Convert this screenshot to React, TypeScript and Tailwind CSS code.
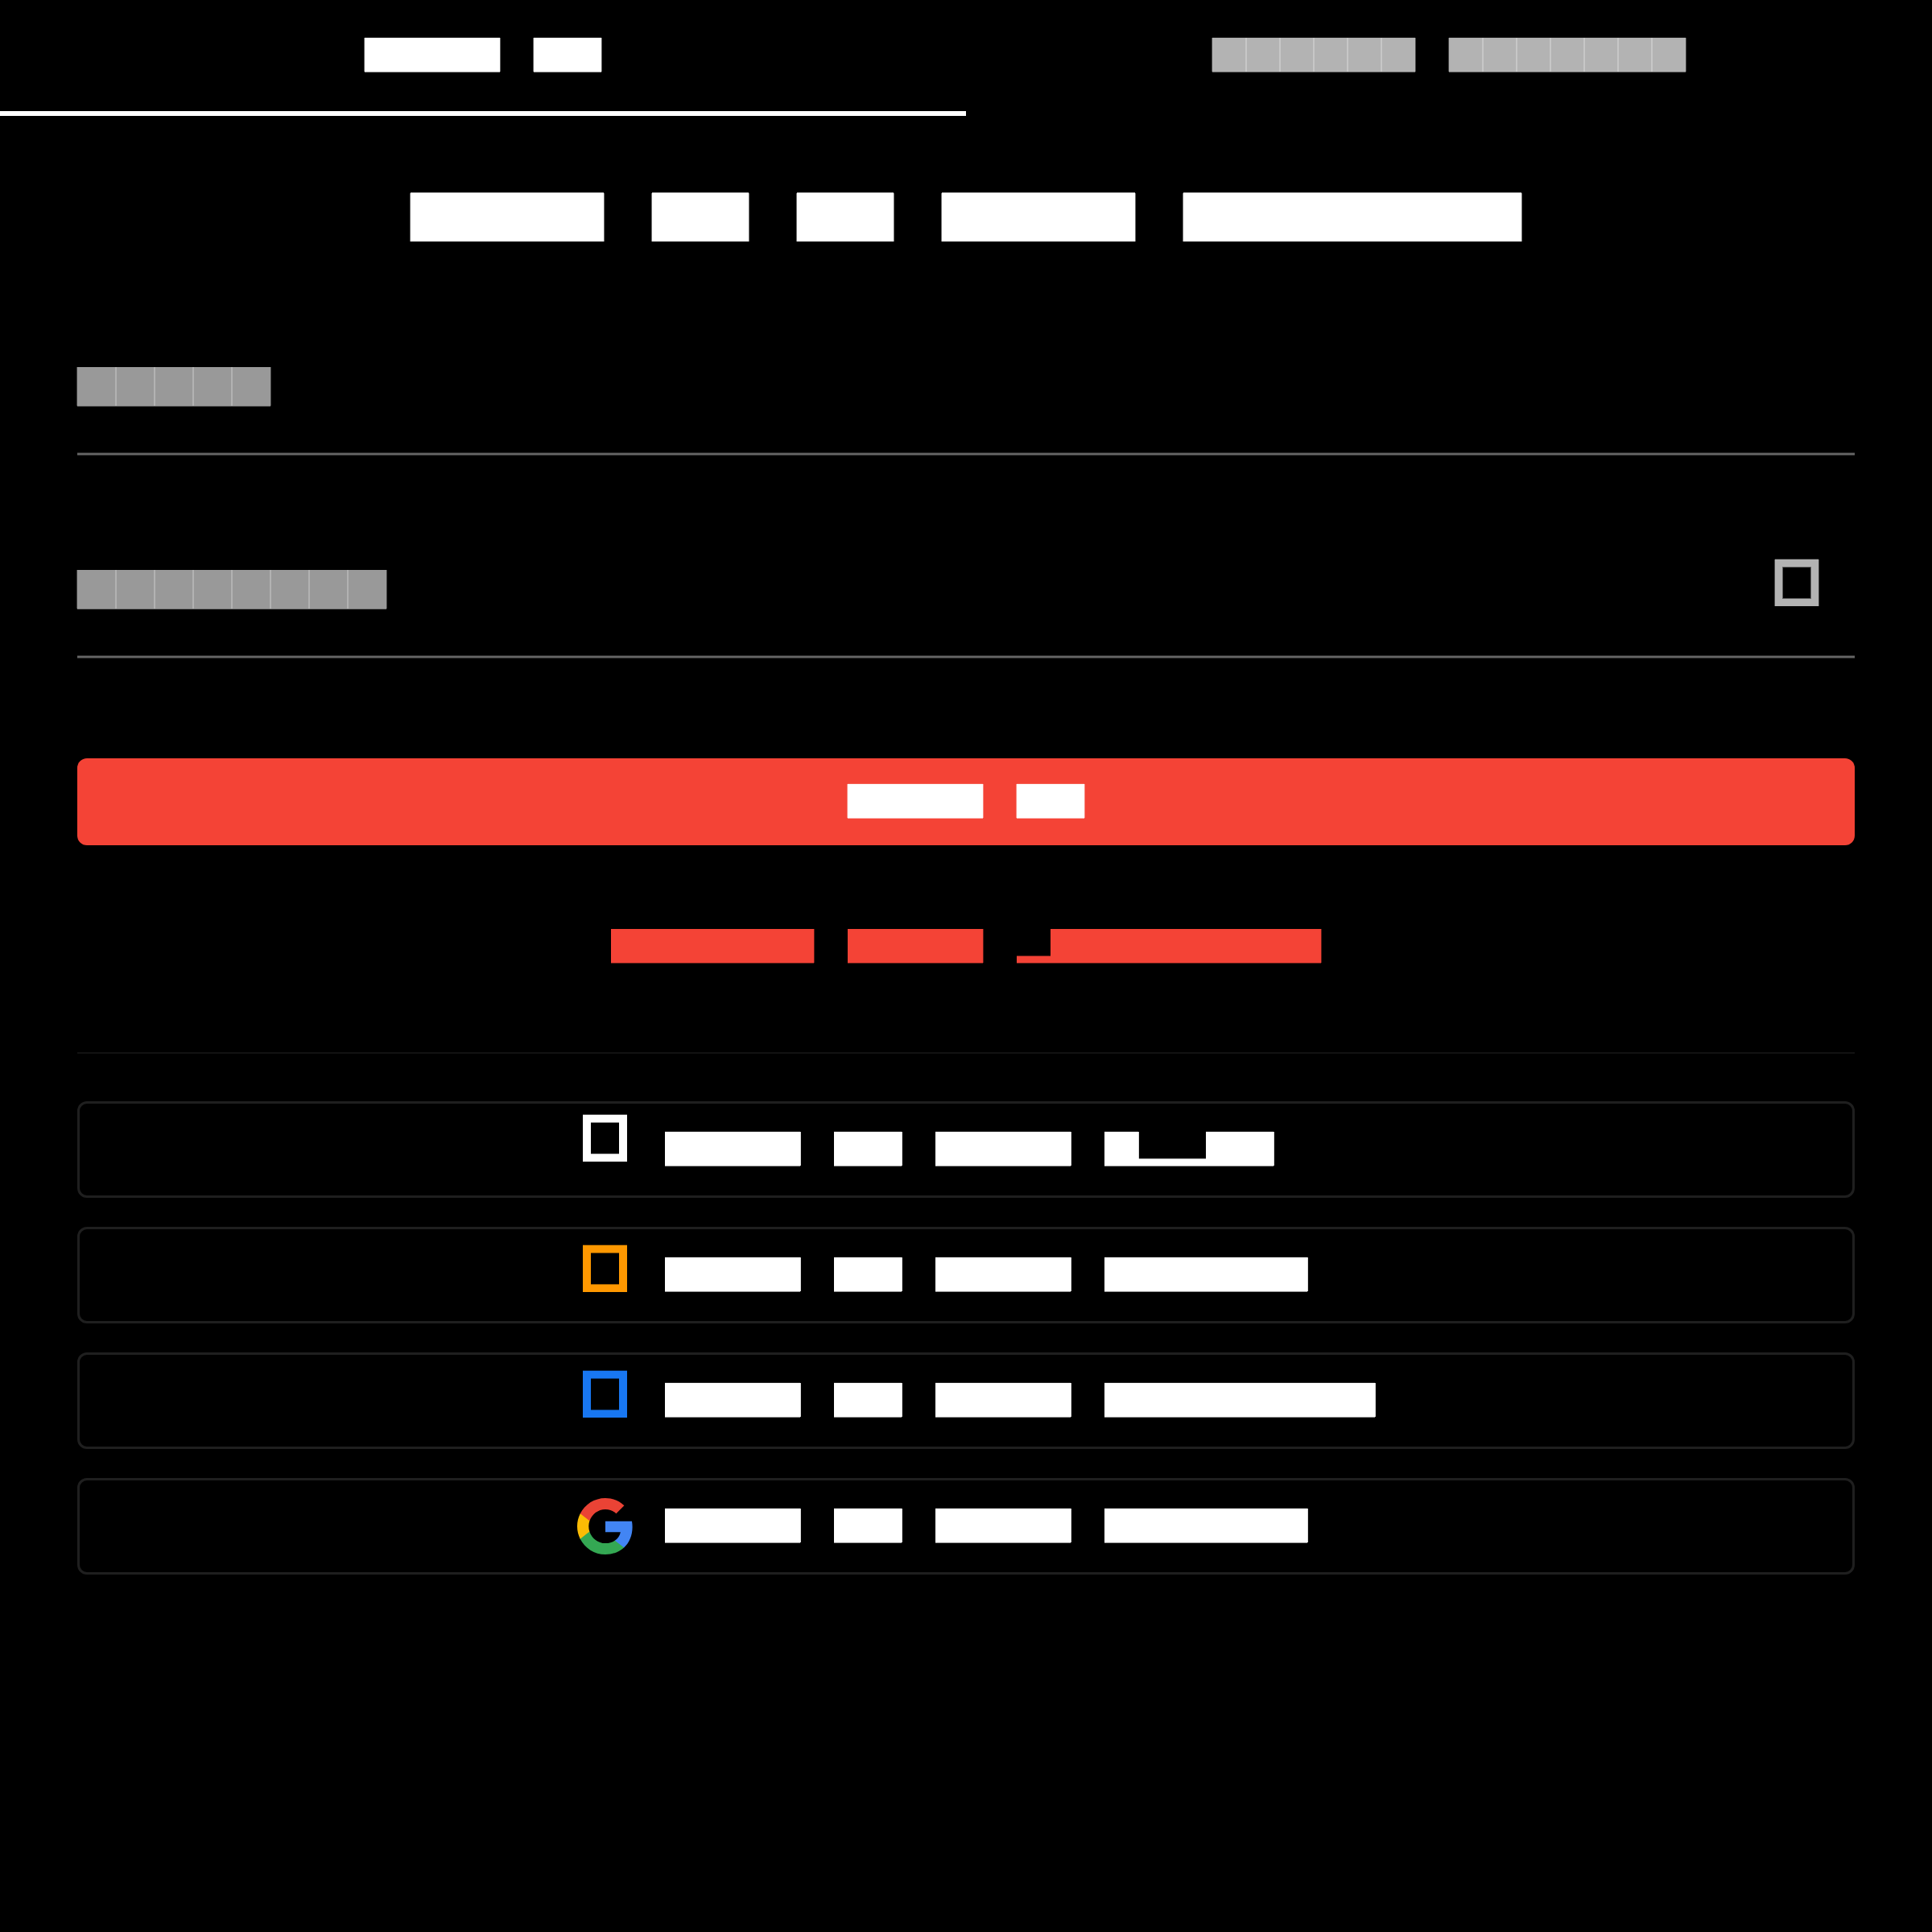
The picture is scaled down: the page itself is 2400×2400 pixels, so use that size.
import type { ReactNode } from "react";

// Each glyph is a solid square; "p" sits below the baseline only, a space is blank.
function Blocks({ text, cell, full, low = "" }: { text: string; cell: string; full: string; low?: string }) {
  return (
    <div className="flex">
      {text.split("").map((c, i) => (
        <div key={i} className={`flex shrink-0 items-end ${cell}`}>
          {c === "x" && <div className={`h-full w-full ${full}`} />}
          {c === "p" && <div className={`h-2 w-full ${low}`} />}
        </div>
      ))}
    </div>
  );
}

const TAB_ON =
  "bg-white shadow-[-1px_0_rgba(255,255,255,0.38),1px_0_rgba(255,255,255,0.38),0_-1px_rgba(255,255,255,0.15),0_1px_rgba(255,255,255,0.6)]";
const TAB_OFF =
  "bg-white/70 shadow-[-1px_0_rgba(255,255,255,0.27),1px_0_rgba(255,255,255,0.27),0_-1px_rgba(255,255,255,0.1),0_1px_rgba(255,255,255,0.4)]";
const TITLE =
  "bg-white shadow-[-1px_0_rgba(255,255,255,0.45),1px_0_rgba(255,255,255,0.45),0_-1px_rgba(255,255,255,0.78)]";
const LABEL =
  "bg-white/60 shadow-[-1px_0_rgba(255,255,255,0.25),1px_0_rgba(255,255,255,0.25),0_1px_rgba(255,255,255,0.45)]";
const LINK = "bg-[#f44336] shadow-[1px_0_rgba(244,67,54,0.4),0_1px_rgba(244,67,54,0.4)]";
const LINK_LOW = "bg-[#f44336] shadow-[0_-1px_rgba(244,67,54,0.5),0_1px_rgba(244,67,54,0.4)]";
const CARD =
  "bg-white shadow-[1px_0_rgba(255,255,255,0.85),0_-1px_rgba(255,255,255,0.15),0_1px_rgba(255,255,255,0.6)]";
const CARD_LOW = "bg-white shadow-[0_-1px_rgba(255,255,255,0.67),0_1px_rgba(255,255,255,0.6)]";

function Field({ text, children }: { text: string; children?: ReactNode }) {
  return (
    <div className="flex h-[126px] flex-col justify-between">
      <div className="flex h-[64px] items-start justify-between">
        <div className="pt-4">
          <Blocks text={text} cell="size-12" full={LABEL} />
        </div>
        {children}
      </div>
      <div className="h-1 border-y border-[#303030] bg-[#666666]" />
    </div>
  );
}

function GoogleIcon() {
  return (
    <svg viewBox="1 1 22 22" className="mt-[22px] ml-px size-[70px]">
      <path fill="#4285F4" d="M22.56 12.25c0-.78-.07-1.53-.2-2.25H12v4.26h5.92c-.26 1.37-1.04 2.53-2.21 3.31v2.77h3.57c2.08-1.92 3.28-4.74 3.28-8.09z" />
      <path fill="#34A853" d="M12 23c2.97 0 5.46-.98 7.28-2.66l-3.57-2.77c-.98.66-2.23 1.06-3.71 1.06-2.86 0-5.29-1.93-6.16-4.53H2.18v2.84C3.99 20.53 7.7 23 12 23z" />
      <path fill="#FBBC05" d="M5.84 14.09c-.22-.66-.35-1.36-.35-2.09s.13-1.43.35-2.09V7.07H2.18C1.43 8.55 1 10.22 1 12s.43 3.45 1.18 4.93l2.85-2.22.81-.62z" />
      <path fill="#EA4335" d="M12 5.38c1.62 0 3.06.56 4.21 1.64l3.15-3.15C17.45 2.09 14.97 1 12 1 7.7 1 3.99 3.47 2.18 7.07l3.66 2.84c.87-2.6 3.3-4.53 6.16-4.53z" />
    </svg>
  );
}

const providers = [
  {
    text: "xxxx xx xxxx xppxx",
    icon: <div className="mt-[14px] ml-2 h-[58px] w-[55px] border-x-10 border-y-9 border-white shadow-[0_-1px_rgba(255,255,255,0.3),inset_0_1px_rgba(255,255,255,0.5),inset_0_-1px_rgba(255,255,255,0.7)]" />,
  },
  {
    text: "xxxx xx xxxx xxxxxx",
    icon: <div className="mt-5 ml-2 h-[58px] w-[55px] border-x-10 border-y-9 border-[#ff9800] shadow-[0_-1px_rgba(255,152,0,0.3),inset_0_1px_rgba(255,152,0,0.5),inset_0_-1px_rgba(255,152,0,0.6)]" />,
  },
  {
    text: "xxxx xx xxxx xxxxxxxx",
    icon: <div className="mt-5 ml-2 h-[58px] w-[55px] border-x-10 border-y-9 border-[#1877f2] shadow-[0_-1px_rgba(24,119,242,0.3),inset_0_1px_rgba(24,119,242,0.5),inset_0_-1px_rgba(24,119,242,0.6)]" />,
  },
  { text: "xxxx xx xxxx xxxxxx", icon: <GoogleIcon /> },
];

export default function App() {
  return (
    <div className="h-[2400px] w-[2400px] bg-black">
      <div className="grid h-36 grid-cols-2">
        <div className="flex justify-center border-b-6 border-white pt-[47px]">
          <Blocks text="xxxx xx" cell="size-[42px]" full={TAB_ON} />
        </div>
        <div className="flex justify-center pt-[47px]">
          <Blocks text="xxxxxx xxxxxxx" cell="size-[42px]" full={TAB_OFF} />
        </div>
      </div>

      <div className="flex flex-col px-24 pt-24">
        <div className="flex justify-center">
          <Blocks text="xxxx xx xx xxxx xxxxxxx" cell="size-[60px]" full={TITLE} />
        </div>

        <div className="mt-[140px] flex flex-col gap-[126px]">
          <Field text="xxxxx" />
          <Field text="xxxxxxxx">
            <div className="mt-[3px] mr-[45px] h-[58px] w-[54px] border-9 border-[#b3b3b3] shadow-[-1px_0_rgba(255,255,255,0.27),1px_0_rgba(255,255,255,0.27),0_-1px_rgba(255,255,255,0.2),inset_0_0_0_1px_rgba(255,255,255,0.38)]" />
          </Field>
        </div>

        <div className="mt-[124px] flex h-[108px] justify-center rounded-xl bg-[#f44336] pt-8">
          <Blocks text="xxxx xx" cell="size-[42px]" full={TAB_ON} />
        </div>

        <div className="mt-[104px] flex justify-center">
          <Blocks text="xxxxxx xxxx pxxxxxxxx" cell="size-[42px]" full={LINK} low={LINK_LOW} />
        </div>

        <div className="mt-[111px] h-0.5 bg-[#121212]" />

        <div className="mt-[59px] flex flex-col gap-9">
          {providers.map((p, i) => (
            <div key={i} className="flex h-[120px] gap-[38px] rounded-xl border-3 border-[#1f1f1f] pl-[617px]">
              <div className="w-[72px]">{p.icon}</div>
              <div className="pt-[35px]">
                <Blocks text={p.text} cell="size-[42px]" full={CARD} low={CARD_LOW} />
              </div>
            </div>
          ))}
        </div>
      </div>
    </div>
  );
}
